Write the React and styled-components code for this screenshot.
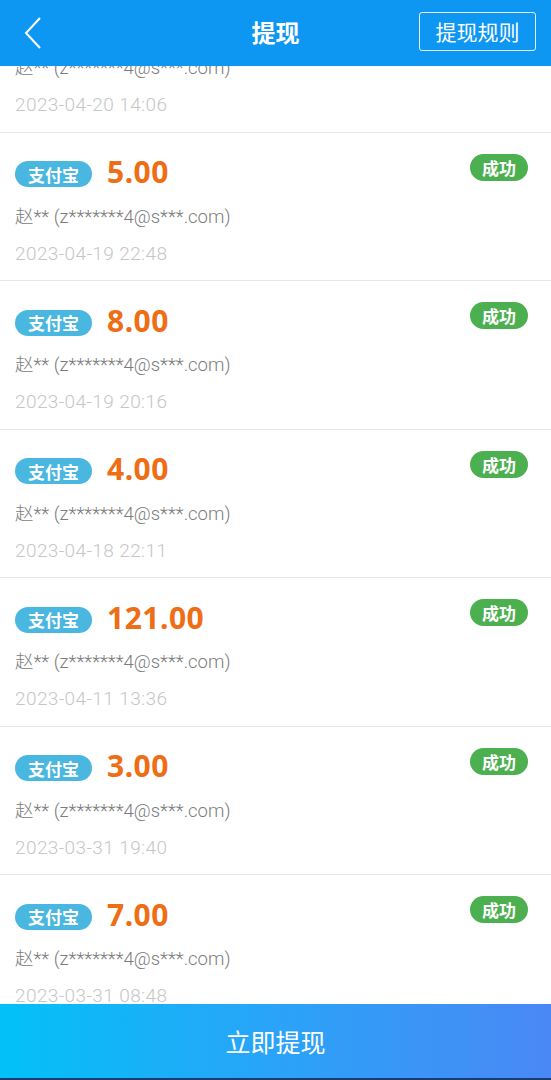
import React from "react";
import styled, { createGlobalStyle } from "styled-components";

const records = [
  { amount: "5.00", time: "2023-04-20 14:06" },
  { amount: "5.00", time: "2023-04-19 22:48" },
  { amount: "8.00", time: "2023-04-19 20:16" },
  { amount: "4.00", time: "2023-04-18 22:11" },
  { amount: "121.00", time: "2023-04-11 13:36" },
  { amount: "3.00", time: "2023-03-31 19:40" },
  { amount: "7.00", time: "2023-03-31 08:48" },
];

const GlobalStyle = createGlobalStyle`
  html, body {
    margin: 0;
    padding: 0;
    background: #fff;
    font-family: "Noto Sans", "Noto Sans CJK SC", sans-serif;
  }
`;

const Page = styled.div`
  width: 551px;
  height: 1080px;
  display: flex;
  flex-direction: column;
  overflow: hidden;
`;

const Header = styled.header`
  height: 66px;
  flex-shrink: 0;
  background: #0d96f2;
  display: grid;
  grid-template-columns: 1fr auto 1fr;
  align-items: center;
  color: #fff;
  position: relative;
  z-index: 1;
`;

const Back = styled.div`
  padding-left: 24px;
  display: flex;
  align-items: center;
`;

const Title = styled.h1`
  margin: 0 0 4px;
  font-size: 24px;
  font-weight: 700;
  font-family: "Noto Sans CJK SC", sans-serif;
`;

const RuleButton = styled.div`
  justify-self: end;
  margin-right: 15px;
  margin-bottom: 4px;
  width: 115px;
  height: 37px;
  border: 1.5px solid #e8f6ff;
  border-radius: 3px;
  display: flex;
  align-items: center;
  justify-content: center;
  font-size: 21px;
  font-family: "Noto Sans CJK SC", sans-serif;
`;

const ListArea = styled.div`
  flex: 1;
  overflow: hidden;
`;

const List = styled.div`
  margin-top: -82px;
`;

const Item = styled.div`
  height: 148.5px;
  box-sizing: border-box;
  padding: 22px 23px 0 15px;
  border-bottom: 1px solid #e6e6e6;
`;

const TopRow = styled.div`
  display: flex;
  align-items: center;
  height: 34px;
`;

const Channel = styled.span`
  background: #4ab7e0;
  color: #fff;
  font-family: "Noto Sans CJK SC", sans-serif;
  font-weight: 700;
  font-size: 17px;
  height: 26px;
  width: 77px;
  border-radius: 13px;
  display: flex;
  align-items: center;
  justify-content: center;
  margin-top: 5px;
`;

const Amount = styled.span`
  margin-left: 15px;
  color: #ee6d15;
  font-family: "Noto Sans", sans-serif;
  font-weight: 700;
  font-size: 30px;
  letter-spacing: 0.5px;
`;

const Status = styled.span`
  margin-left: auto;
  align-self: flex-start;
  margin-top: -1px;
  background: #4caf50;
  color: #fff;
  font-family: "Noto Sans CJK SC", sans-serif;
  font-weight: 700;
  font-size: 17px;
  height: 27px;
  width: 58px;
  border-radius: 13.5px;
  display: flex;
  align-items: center;
  justify-content: center;
`;

const Account = styled.div`
  margin-top: 16px;
  color: #7c7c7c;
  font-size: 18.5px;
  font-family: Roboto, "Noto Sans CJK SC", sans-serif;
  font-weight: 300;
  line-height: 24px;
`;

const Time = styled.div`
  margin-top: 13px;
  color: #c6c6c6;
  font-size: 19px;
  letter-spacing: 0.4px;
  font-family: Roboto, sans-serif;
  font-weight: 300;
  line-height: 24px;
`;

const Footer = styled.div`
  height: 76px;
  flex-shrink: 0;
  background: linear-gradient(90deg, #03c1f8 0%, #2aa3f8 50%, #4a88f5 100%);
  border-bottom: 2px solid #1b3c6e;
  box-sizing: border-box;
  display: flex;
  align-items: center;
  justify-content: center;
  color: #fff;
  font-size: 25px;
  font-family: "Noto Sans CJK SC", sans-serif;
`;

export default function App() {
  return (
    <>
      <GlobalStyle />
      <Page>
        <Header>
          <Back>
            <svg width="18" height="32" viewBox="0 0 18 32">
              <path d="M16 1 L2 16 L16 31" fill="none" stroke="#fff" strokeWidth="2" />
            </svg>
          </Back>
          <Title>提现</Title>
          <RuleButton>提现规则</RuleButton>
        </Header>
        <ListArea>
          <List>
            {records.map((r, i) => (
              <Item key={i}>
                <TopRow>
                  <Channel>支付宝</Channel>
                  <Amount>{r.amount}</Amount>
                  <Status>成功</Status>
                </TopRow>
                <Account>赵** (z*******4@s***.com)</Account>
                <Time>{r.time}</Time>
              </Item>
            ))}
          </List>
        </ListArea>
        <Footer>立即提现</Footer>
      </Page>
    </>
  );
}
